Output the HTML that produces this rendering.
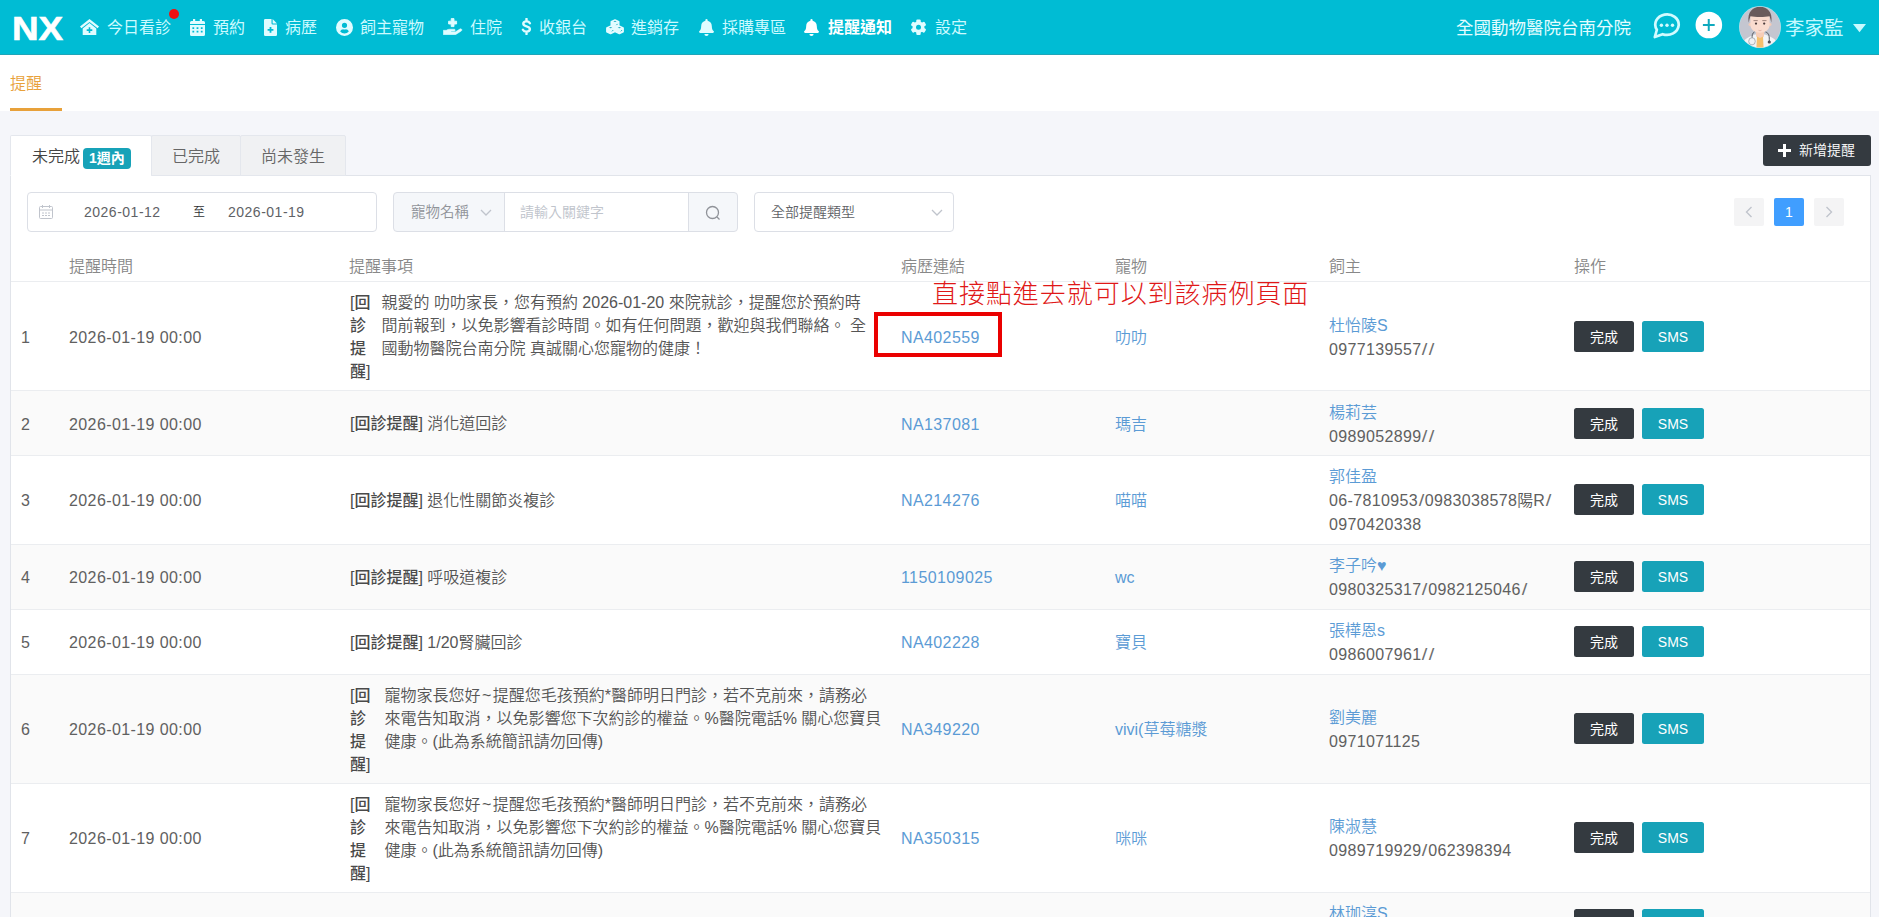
<!DOCTYPE html>
<html lang="zh-Hant">
<head>
<meta charset="utf-8">
<title>提醒</title>
<style>
*{box-sizing:border-box;margin:0;padding:0}
html,body{width:1879px;height:917px;overflow:hidden}
body{background:#f5f6fa;font-family:"Liberation Sans","Noto Sans CJK TC",sans-serif;font-size:16px;color:#555;position:relative;font-weight:350}
.abs{position:absolute}
/* top bar */
#top{position:absolute;left:0;top:0;width:1879px;height:55px;background:#00bcd4;border-bottom:1px solid #1fa5b8}
#logo{position:absolute;left:11.500px;top:9px;font-size:33.5px;line-height:40px;font-weight:bold;color:#fff;-webkit-text-stroke:0.6px #fff;transform:scaleX(1.1);transform-origin:0 0;font-family:"Liberation Sans",sans-serif}
.nav{font-weight:400;position:absolute;top:0;height:54px;line-height:56px;color:#ccfaff;font-size:16px;white-space:nowrap}
.nav svg{position:absolute;top:19px;left:0;fill:#e0fcff}
.nav span{position:absolute;left:0;top:0}
.nav.act{color:#fff;font-weight:bold}
#dot{position:absolute;left:169px;top:9px;width:10px;height:10px;border-radius:50%;background:#ee1111}
/* sub bar */
#sub{position:absolute;left:0;top:55px;width:1879px;height:56px;background:#fff}
#sub .t{position:absolute;left:10px;top:17px;font-size:16px;line-height:24px;color:#e8a13a}
#sub .u{position:absolute;left:10px;top:53px;width:52px;height:3px;background:#e8a13a}
/* card */
#card{position:absolute;left:10px;top:175px;width:1861px;height:760px;background:#fff;border:1px solid #e1e4ea}
.tab{position:absolute;top:135px;height:41px;line-height:42px;font-size:16px;color:#666;border-radius:2px 2px 0 0;background:#f0f1f3;border:1px solid #e4e7ed;text-align:center}
.tab.on{background:#fff;border-bottom-color:#fff;color:#444}
.badge{display:inline-block;background:#17a2b8;color:#fff;font-weight:bold;font-size:14px;line-height:21px;height:21px;padding:0 6px;border-radius:4px;vertical-align:-1px;margin-left:3px}
.inp{position:absolute;top:192px;height:40px;border:1px solid #dcdfe6;border-radius:4px;background:#fff;font-size:14px;line-height:38px;color:#606266}
table{position:absolute;left:11px;top:251px;width:1859px;border-collapse:separate;border-spacing:0;table-layout:fixed}
th{height:31px;font-weight:350;color:#888;text-align:left;padding:0 10px;font-size:16px;border-bottom:1px solid #ebedf0;line-height:28px;padding-top:2px}
td{padding:10px 10px 6px;white-space:nowrap;border-bottom:1px solid #ebedf0;vertical-align:middle;line-height:24px;font-size:16px;color:#555}
tr.odd td{background:#fafafa}
a{color:#5b9bd5;text-decoration:none}
.btn{position:relative;top:-1.5px;display:inline-block;height:31px;line-height:33px;font-size:14px;color:#fff;border-radius:2.500px;font-weight:400;text-align:center;vertical-align:middle}
.bd{background:#343a40;width:60px;margin-right:8px}
.bi{background:#17a2b8;width:62px}
.rem{display:flex;line-height:23px;position:relative;left:1px;top:-1px}
.rem b{color:#4a4a4a;font-weight:500;flex:none;white-space:nowrap}
.ls{letter-spacing:0.4px}
.inp .ls{letter-spacing:0.5px}
.ph{letter-spacing:0.35px}
.ph i{font-style:normal;letter-spacing:1.2px;padding-left:1.2px;display:inline-block;transform:scaleX(1.25);color:#707070}
.pg{top:198px;width:30px;height:28px;background:#f4f4f5;border-radius:2px;text-align:center;line-height:28px;font-size:14px;color:#606266}
.pg svg{margin-top:8px}
.rem.one{display:block;top:-1.5px}
.lo td{padding:9px 10px 7px}
.lo .rem{top:0}
.lo .rem.one{top:-0.5px}
.ti{padding:0 1.5px}
td .ph,td .ls{color:#606060}
.inp .ls{color:#606266}
</style>
</head>
<body>
<div id="top">

  <div id="logo">NX</div>
  <!-- nav items -->
  <div class="nav" style="left:80px"><svg width="19" height="16" viewBox="0 0 19 16"><path d="M9.500 0 L0 7.500 L1.400 9.200 L9.500 2.900 L17.600 9.200 L19 7.500 Z"/><path d="M9.500 4.100 L2.700 9.400 V16 H16.300 V9.400 Z M8.700 8.300 h1.600 v2 h2 v1.600 h-2 v2 h-1.600 v-2 h-2 v-1.600 h2 Z" fill-rule="evenodd"/></svg><span style="left:27px">今日看診</span></div>
  <div id="dot"></div>
  <div class="nav" style="left:190px"><svg width="15" height="17" viewBox="0 0 15 17"><path d="M3 0h2.200v2h4.600V0H12v2h1.500A1.500 1.500 0 0 1 15 3.500V5H0V3.500A1.500 1.500 0 0 1 1.500 2H3Z"/><path d="M0 6h15v9.500A1.500 1.500 0 0 1 13.500 17h-12A1.500 1.500 0 0 1 0 15.500Z M2.4 8.2v1.800h1.800v-1.800Z M6.6 8.2v1.800h1.800v-1.800Z M10.8 8.2v1.800h1.800v-1.800Z M2.4 11.8v1.800h1.800v-1.800Z M6.6 11.8v1.800h1.800v-1.800Z M10.8 11.8v1.800h1.800v-1.800Z" fill-rule="evenodd"/></svg><span style="left:23px">預約</span></div>
  <div class="nav" style="left:264px"><svg width="13" height="17" viewBox="0 0 13 17"><path d="M1.300 0H7.500V4.300A1.200 1.200 0 0 0 8.700 5.500H13V15.700A1.300 1.300 0 0 1 11.700 17H1.300A1.300 1.300 0 0 1 0 15.700V1.300A1.300 1.300 0 0 1 1.300 0Z M5.600 8v2H3.600v1.800h2v2h1.800v-2h2V10h-2V8Z" fill-rule="evenodd"/><path d="M8.600 0 L13 4.400 H8.600Z"/></svg><span style="left:21px">病歷</span></div>
  <div class="nav" style="left:336px"><svg width="17" height="17" viewBox="0 0 17 17"><path d="M8.500 0A8.500 8.500 0 1 0 8.500 17A8.500 8.500 0 1 0 8.500 0Z M8.500 3.700A2.600 2.600 0 1 1 8.500 8.900A2.600 2.600 0 1 1 8.500 3.700Z M8.500 14.600A5.800 5.800 0 0 1 4.200 12.500C4.800 11.200 5.900 10.300 7.200 10.300C7.300 10.300 7.400 10.300 7.500 10.400C7.800 10.500 8.200 10.600 8.500 10.600S9.200 10.500 9.500 10.400C9.600 10.300 9.700 10.300 9.800 10.300C11.100 10.300 12.200 11.200 12.800 12.500A5.800 5.800 0 0 1 8.500 14.600Z" fill-rule="evenodd"/></svg><span style="left:24px">飼主寵物</span></div>
  <div class="nav" style="left:443px"><svg width="20" height="17" viewBox="0 0 20 17" style="top:18px"><path d="M8.200 .600h2.800v2.600h2.600V6h-2.600v2.600H8.200V6H5.600V3.200h2.600Z" stroke="#e0fcff" stroke-width=".9" stroke-linejoin="round"/><path d="M.300 12.300h3c.9-.7 2-1.100 3.300-1.100h4.600c1.400 0 1.400 1.900 0 1.900H8.400c-.5 0-.5.700 0 .700h4.100l4.300-2.700c1.500-1 2.900.8 1.500 1.900l-5 3.200c-.5.400-1.100.5-1.700.5H.300Z" stroke="#e0fcff" stroke-width=".5" stroke-linejoin="round"/></svg><span style="left:27px">住院</span></div>
  <div class="nav" style="left:521px"><svg width="11" height="17" viewBox="0 0 11 17" style="top:18px"><path d="M8.900 5.200C8.200 3.900 6.900 3.400 5.500 3.400 3.700 3.400 2.300 4.300 2.300 5.800 2.300 7.300 3.700 7.800 5.500 8.300 7.400 8.800 8.900 9.500 8.900 11.100 8.900 12.700 7.400 13.600 5.500 13.600 3.900 13.600 2.600 13 1.900 11.700M5.500 .9V3.400M5.500 13.600V16.100" fill="none" stroke="#e0fcff" stroke-width="2.400" stroke-linecap="round" stroke-linejoin="round"/></svg><span style="left:18px">收銀台</span></div>
  <div class="nav" style="left:606px"><svg width="18" height="16" viewBox="0 0 18 16"><path d="M9.0 1.0 L12.7 2.7 L12.7 6.5 L9.0 8.2 L5.3 6.5 L5.3 2.7Z" stroke="#e6fbff" stroke-width="1.600" stroke-linejoin="round"/><path d="M7.3 2.5 L9.0 1.8 L10.7 2.5 L9.0 3.1Z" fill="#1cadc2"/><path d="M10.4 6.1 L11.6 4.9" stroke="#1cadc2" stroke-width="1" fill="none"/><path d="M4.6 7.2 L8.3 8.9 L8.3 12.7 L4.6 14.4 L0.9 12.7 L0.9 8.9Z" stroke="#e6fbff" stroke-width="1.600" stroke-linejoin="round"/><path d="M2.9 8.7 L4.6 8.0 L6.3 8.7 L4.6 9.3Z" fill="#1cadc2"/><path d="M6.0 12.3 L7.2 11.1" stroke="#1cadc2" stroke-width="1" fill="none"/><path d="M13.4 7.2 L17.1 8.9 L17.1 12.7 L13.4 14.4 L9.7 12.7 L9.7 8.9Z" stroke="#e6fbff" stroke-width="1.600" stroke-linejoin="round"/><path d="M11.7 8.7 L13.4 8.0 L15.1 8.7 L13.4 9.3Z" fill="#1cadc2"/><path d="M14.8 12.3 L16.0 11.1" stroke="#1cadc2" stroke-width="1" fill="none"/></svg><span style="left:25px">進銷存</span></div>
  <div class="nav" style="left:699px"><svg width="15" height="17" viewBox="0 0 15 17"><path d="M7.500 0a1.100 1.100 0 0 1 1.100 1.100v.600c2.400.500 4.200 2.600 4.200 5.200 0 3.200 1 4.300 1.800 5.100.700.700.200 1.900-.800 1.900H1.200c-1 0-1.500-1.200-.8-1.900.8-.8 1.800-1.900 1.800-5.100 0-2.600 1.800-4.700 4.200-5.200v-.600A1.100 1.100 0 0 1 7.500 0Z M5.400 14.900h4.200a2.100 2.100 0 0 1-4.200 0Z"/></svg><span style="left:23px">採購專區</span></div>
  <div class="nav act" style="left:804px"><svg width="15" height="17" viewBox="0 0 15 17" style="fill:#fff"><path d="M7.500 0a1.100 1.100 0 0 1 1.100 1.100v.600c2.400.500 4.200 2.600 4.200 5.200 0 3.200 1 4.300 1.800 5.100.700.700.200 1.900-.800 1.900H1.200c-1 0-1.500-1.200-.8-1.900.8-.8 1.800-1.900 1.800-5.100 0-2.600 1.800-4.700 4.200-5.200v-.600A1.100 1.100 0 0 1 7.500 0Z M5.400 14.900h4.200a2.100 2.100 0 0 1-4.200 0Z"/></svg><span style="left:24px">提醒通知</span></div>
  <div class="nav" style="left:910px"><svg width="17" height="17" viewBox="0 0 17 17" style="top:18.500px"><circle cx="8.500" cy="8.200" r="5.900"/><rect x="6.300" y=".400" width="4.400" height="6" rx="1.100" transform="rotate(0 8.500 8.200)"/><rect x="6.300" y=".400" width="4.400" height="6" rx="1.100" transform="rotate(60 8.500 8.200)"/><rect x="6.300" y=".400" width="4.400" height="6" rx="1.100" transform="rotate(120 8.500 8.200)"/><rect x="6.300" y=".400" width="4.400" height="6" rx="1.100" transform="rotate(180 8.500 8.200)"/><rect x="6.300" y=".400" width="4.400" height="6" rx="1.100" transform="rotate(240 8.500 8.200)"/><rect x="6.300" y=".400" width="4.400" height="6" rx="1.100" transform="rotate(300 8.500 8.200)"/><circle cx="8.500" cy="8.200" r="2.500" fill="#00bcd4"/></svg><span style="left:25px">設定</span></div>
  <!-- right side -->
  <div class="abs" style="left:1456px;top:0;height:54px;line-height:56px;font-size:17.500px;color:#e4fcff;font-weight:400;white-space:nowrap">全國動物醫院台南分院</div>
  <svg class="abs" style="left:1653px;top:12px" width="28" height="27" viewBox="0 0 28 27"><path d="M3.870 17.750A11.700 10.300 0 1 1 9.600 22.150L1.800 25 Z" fill="none" stroke="#d2fbff" stroke-width="2.700" stroke-linejoin="round"/><circle cx="8.400" cy="13.200" r="1.700" fill="#d2fbff"/><circle cx="14" cy="13.200" r="1.700" fill="#d2fbff"/><circle cx="19.500" cy="13.200" r="1.700" fill="#d2fbff"/></svg>
  <svg class="abs" style="left:1695px;top:11px" width="28" height="28" viewBox="0 0 28 28"><circle cx="13.850" cy="14" r="13.300" fill="#fff"/><path d="M13.750 8.100v11.800M7.900 14h11.800" stroke="#0fa9be" stroke-width="2" fill="none"/></svg>
  <svg class="abs" style="left:1739px;top:6px" width="42" height="42" viewBox="0 0 42 42"><defs><clipPath id="av"><circle cx="21" cy="21" r="20.500"/></clipPath></defs><circle cx="21" cy="21" r="21" fill="#a6e6f0"/><g clip-path="url(#av)"><rect width="42" height="42" fill="#c4c6d0"/><path d="M2 42C3 33.500 9 31 16 28.500L26 28.500C33 31 39 33.500 40 42Z" fill="#f3f4f6"/><path d="M17 23h8v7.500l-4 2.500-4-2.500Z" fill="#f6cdb8"/><path d="M18 30.500l3 1.500 3-1.500 .6 11.500h-7.200Z" fill="#f6c06e"/><circle cx="11.300" cy="18.500" r="1.800" fill="#f3cbb8"/><circle cx="30.700" cy="18.500" r="1.800" fill="#f3cbb8"/><path d="M11.400 9.500H30.600V18.500C30.600 23.500 26.500 26.700 21 26.700S11.400 23.500 11.400 18.500Z" fill="#fadccf"/><path d="M9.700 16.500C8 6 14 .8 21 .8S34 6 32.300 16.500C31.800 14 31.300 12 30.600 10.200 26 11.300 16 11.300 11.400 10.200 10.700 12 10.200 14 9.700 16.500Z" fill="#6a5b5c"/><circle cx="17" cy="17.600" r="1.150" fill="#4b3b3b"/><circle cx="25.200" cy="17.600" r="1.150" fill="#4b3b3b"/><path d="M14.500 14.600h4.200M23.300 14.600h4.200" stroke="#8a7068" stroke-width=".8" fill="none"/><path d="M19.500 24.300q1.500 .8 3 0" stroke="#e0a898" stroke-width=".7" fill="none"/><path d="M15.500 26C13 27 13 30 13.200 32M26.500 26C30.500 27 30.300 31 30.300 35" stroke="#555a60" stroke-width="1" fill="none"/><ellipse cx="13" cy="35.300" rx="3.300" ry="3.600" fill="#f0f0f2" stroke="#a0a3aa" stroke-width=".8"/><circle cx="30.300" cy="36" r="1.600" fill="#4a4e55"/></g></svg>
  <div class="abs" style="left:1785px;top:0;height:54px;line-height:56px;font-size:19.500px;color:#c4f9ff;font-weight:400;white-space:nowrap">李家監</div>
  <svg class="abs" style="left:1853px;top:24px" width="13" height="9" viewBox="0 0 13 9"><path d="M0 0h13L6.500 8.200Z" fill="#c8faff"/></svg>
</div>
<div id="sub"><div class="t">提醒</div><div class="u"></div></div>
<div id="card"></div>
<div class="tab on" style="left:10px;width:142px;text-align:left;padding-left:21px">未完成<span class="badge">1週內</span></div>
<div class="tab" style="left:151px;width:90px">已完成</div>
<div class="tab" style="left:240px;width:106px">尚未發生</div>
<div class="abs" id="newbtn" style="left:1763px;top:135px;width:108px;height:31px;background:#343a40;border-radius:3px;color:#fff;font-size:14px;line-height:31px"><svg class="abs" style="left:15px;top:9px" width="13" height="13" viewBox="0 0 13 13"><path d="M5 0h3v5h5v3H8v5H5V8H0V5h5Z" fill="#fff"/></svg><span class="abs" style="left:36px;top:0">新增提醒</span></div>
<!-- filters -->
<div class="inp" style="left:27px;width:350px"><svg class="abs" style="left:11px;top:12px" width="14" height="14" viewBox="0 0 14 14"><rect x="0.500" y="1.500" width="13" height="12" rx="1" fill="none" stroke="#c0c4cc"/><path d="M0.500 5h13M3.500 0v3M10.500 0v3M3 8h2M6 8h2M9 8h2M3 10.500h2M6 10.500h2M9 10.500h2" stroke="#c0c4cc" fill="none"/></svg><span class="abs ls" style="left:56px;top:0">2026-01-12</span><span class="abs" style="left:165px;top:0;color:#303133;font-size:12px">至</span><span class="abs ls" style="left:200px;top:0">2026-01-19</span></div>
<div class="inp" style="left:393px;width:345px;background:#f5f7fa;overflow:hidden"><span class="abs" style="left:17px;top:0;color:#909399;font-size:14.500px">寵物名稱</span><svg class="abs" style="left:86px;top:16px" width="12" height="8" viewBox="0 0 12 8"><path d="M1 1l5 5 5-5" fill="none" stroke="#c0c4cc" stroke-width="1.300"/></svg><div class="abs" style="left:110px;top:-1px;width:185px;height:40px;background:#fff;border:1px solid #dcdfe6"><span class="abs" style="left:15px;top:0;color:#c0c4cc;font-size:14px">請輸入關鍵字</span></div><svg class="abs" style="left:311px;top:12px" width="16" height="16" viewBox="0 0 16 16"><circle cx="7.500" cy="7.500" r="6" fill="none" stroke="#909399" stroke-width="1.300"/><path d="M12 12l2.500 2.500" stroke="#909399" stroke-width="1.300"/></svg></div>
<div class="inp" style="left:754px;width:200px"><span class="abs" style="left:16px;top:0">全部提醒類型</span><svg class="abs" style="left:176px;top:16px" width="12" height="8" viewBox="0 0 12 8"><path d="M1 1l5 5 5-5" fill="none" stroke="#c0c4cc" stroke-width="1.300"/></svg></div>
<!-- pager -->
<div class="abs pg" style="left:1734px"><svg width="8" height="12" viewBox="0 0 8 12"><path d="M6.500 1L1.500 6l5 5" fill="none" stroke="#c0c4cc" stroke-width="1.400"/></svg></div>
<div class="abs pg" style="left:1774px;background:#409eff;color:#fff">1</div>
<div class="abs pg" style="left:1814px"><svg width="8" height="12" viewBox="0 0 8 12"><path d="M1.500 1l5 5-5 5" fill="none" stroke="#c0c4cc" stroke-width="1.400"/></svg></div>
<!-- table -->
<table>
<colgroup><col style="width:48px"><col style="width:280px"><col style="width:552px"><col style="width:214px"><col style="width:214px"><col style="width:245px"><col style="width:306px"></colgroup>
<tr><th></th><th>提醒時間</th><th>提醒事項</th><th>病歷連結</th><th>寵物</th><th>飼主</th><th>操作</th></tr>
<tr style="height:109px"><td><span class="ls">1</span></td><td><span class="ls">2026-01-19 00:00</span></td><td><div class="rem"><b>[回<br>診<br>提<br>醒]</b><div style="margin-left:11px">親愛的 叻叻家長，您有預約 2026-01-20 來院就診，提醒您於預約時<br>間前報到，以免影響看診時間。如有任何問題，歡迎與我們聯絡。 全<br>國動物醫院台南分院 真誠關心您寵物的健康！</div></div></td><td><span class="ls"><a>NA402559</a></span></td><td><a>叻叻</a></td><td><a>杜怡陵S</a><br><span class="ph">0977139557<i>/</i><i>/</i></span></td><td><span class="btn bd">完成</span><span class="btn bi">SMS</span></td></tr>
<tr class="odd" style="height:65px"><td><span class="ls">2</span></td><td><span class="ls">2026-01-19 00:00</span></td><td><div class="rem one"><b>[回診提醒]</b>&nbsp;消化道回診</div></td><td><span class="ls"><a>NA137081</a></span></td><td><a>瑪吉</a></td><td><a>楊莉芸</a><br><span class="ph">0989052899<i>/</i><i>/</i></span></td><td><span class="btn bd">完成</span><span class="btn bi">SMS</span></td></tr>
<tr class="lo" style="height:89px"><td><span class="ls">3</span></td><td><span class="ls">2026-01-19 00:00</span></td><td><div class="rem one"><b>[回診提醒]</b>&nbsp;退化性關節炎複診</div></td><td><span class="ls"><a>NA214276</a></span></td><td><a>喵喵</a></td><td><a>郭佳盈</a><br><span class="ph">06-7810953<i>/</i>0983038578</span>陽<span class="ph">R<i>/</i></span><br><span class="ph">0970420338</span></td><td><span class="btn bd">完成</span><span class="btn bi">SMS</span></td></tr>
<tr class="odd lo" style="height:65px"><td><span class="ls">4</span></td><td><span class="ls">2026-01-19 00:00</span></td><td><div class="rem one"><b>[回診提醒]</b>&nbsp;呼吸道複診</div></td><td><span class="ls"><a>1150109025</a></span></td><td><a>wc</a></td><td><a>李子吟♥</a><br><span class="ph">0980325317<i>/</i>0982125046<i>/</i></span></td><td><span class="btn bd">完成</span><span class="btn bi">SMS</span></td></tr>
<tr class="lo" style="height:65px"><td><span class="ls">5</span></td><td><span class="ls">2026-01-19 00:00</span></td><td><div class="rem one"><b>[回診提醒]</b>&nbsp;1/20腎臟回診</div></td><td><span class="ls"><a>NA402228</a></span></td><td><a>寶貝</a></td><td><a>張樺恩s</a><br><span class="ph">0986007961<i>/</i><i>/</i></span></td><td><span class="btn bd">完成</span><span class="btn bi">SMS</span></td></tr>
<tr class="odd lo" style="height:109px"><td><span class="ls">6</span></td><td><span class="ls">2026-01-19 00:00</span></td><td><div class="rem"><b>[回<br>診<br>提<br>醒]</b><div style="margin-left:14px">寵物家長您好<span class="ti">~</span>提醒您毛孩預約*醫師明日門診，若不克前來，請務必<br>來電告知取消，以免影響您下次約診的權益。%醫院電話% 關心您寶貝<br>健康。(此為系統簡訊請勿回傳)</div></div></td><td><span class="ls"><a>NA349220</a></span></td><td><a>vivi(草莓糖漿</a></td><td><a>劉美麗</a><br><span class="ph">0971071125</span></td><td><span class="btn bd">完成</span><span class="btn bi">SMS</span></td></tr>
<tr class="lo" style="height:109px"><td><span class="ls">7</span></td><td><span class="ls">2026-01-19 00:00</span></td><td><div class="rem"><b>[回<br>診<br>提<br>醒]</b><div style="margin-left:14px">寵物家長您好<span class="ti">~</span>提醒您毛孩預約*醫師明日門診，若不克前來，請務必<br>來電告知取消，以免影響您下次約診的權益。%醫院電話% 關心您寶貝<br>健康。(此為系統簡訊請勿回傳)</div></div></td><td><span class="ls"><a>NA350315</a></span></td><td><a>咪咪</a></td><td><a>陳淑慧</a><br><span class="ph">0989719929<i>/</i>062398394</span></td><td><span class="btn bd">完成</span><span class="btn bi">SMS</span></td></tr>
<tr class="odd lo" style="height:65px"><td><span class="ls">8</span></td><td><span class="ls">2026-01-19 00:00</span></td><td></td><td></td><td></td><td><a>林珈淳S</a><br>&nbsp;</td><td><span class="btn bd">完成</span><span class="btn bi">SMS</span></td></tr>
</table>
<!-- annotation -->
<div class="abs" style="left:874px;top:312px;width:128px;height:45px;border:4px solid #ea0000"></div>
<div class="abs" style="left:932px;top:278px;font-size:26px;line-height:32px;letter-spacing:0.950px;color:#e01818;font-weight:300;white-space:nowrap">直接點進去就可以到該病例頁面</div>
</body>
</html>
